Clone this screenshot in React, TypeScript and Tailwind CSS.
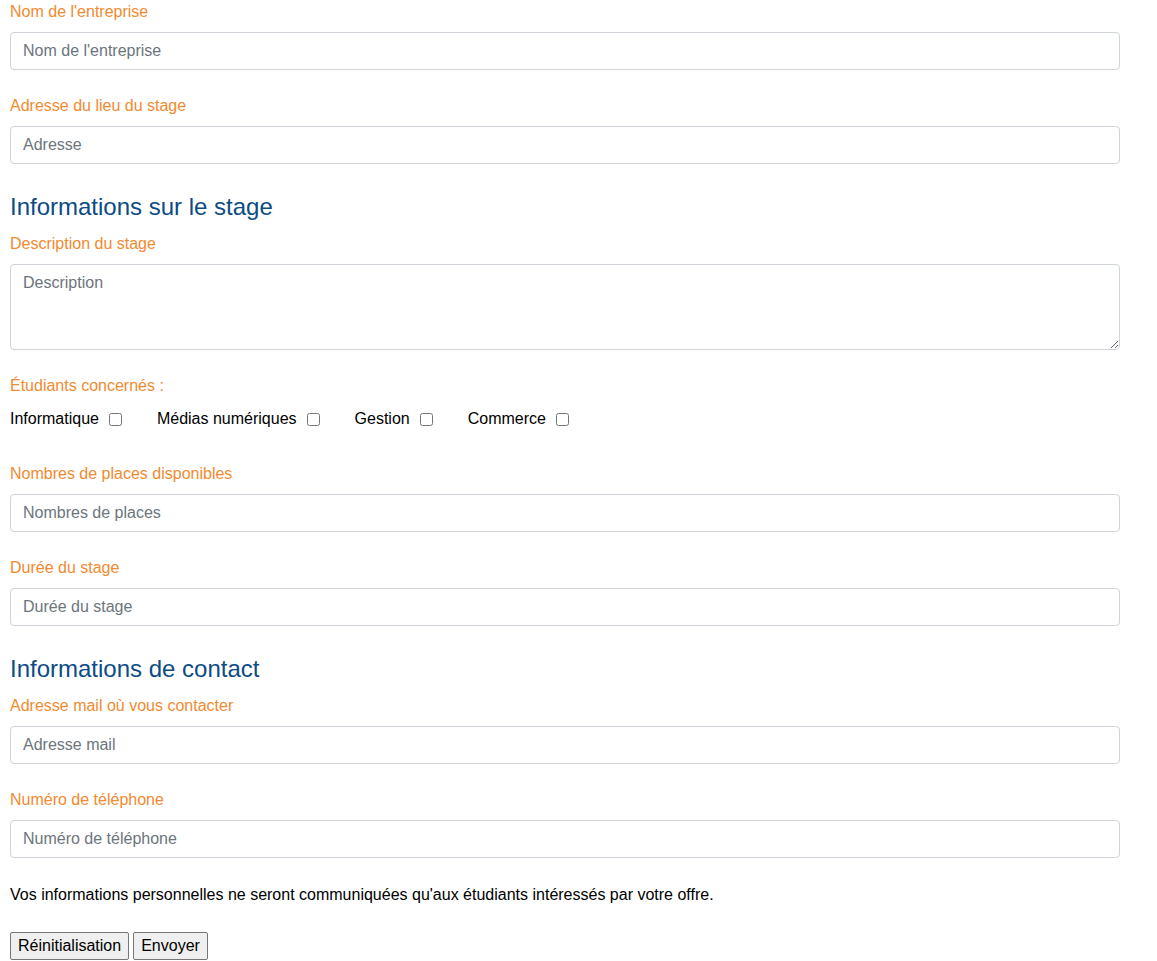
import React from "react";

const font = { fontFamily: '"Liberation Sans", Arial, sans-serif' };

function Field({ label, placeholder }: { label: string; placeholder: string }) {
  return (
    <div className="mb-6">
      <label className="block text-[16px] leading-[24px] text-[#f28a30] mb-2">{label}</label>
      <input
        type="text"
        placeholder={placeholder}
        className="block w-full h-[38px] px-3 py-[6px] text-[16px] leading-[24px] text-[#495057] bg-white border border-[#ced4da] rounded-[4px] placeholder:text-[#6c757d] outline-none"
      />
    </div>
  );
}

function Heading({ children }: { children: React.ReactNode }) {
  return (
    <h3 className="text-[24px] leading-[29px] text-[#0c4b86] font-normal pt-1 mb-[11px]">{children}</h3>
  );
}

export default function App() {
  const checks = ["Informatique", "Médias numériques", "Gestion", "Commerce"];
  return (
    <div className="bg-white min-h-[961px] text-black" style={font}>
      <form className="w-[1110px] ml-[10px]">
        <Field label="Nom de l'entreprise" placeholder="Nom de l'entreprise" />
        <Field label="Adresse du lieu du stage" placeholder="Adresse" />
        <Heading>Informations sur le stage</Heading>
        <div className="mb-6">
          <label className="block text-[16px] leading-[24px] text-[#f28a30] mb-2">Description du stage</label>
          <textarea
            placeholder="Description"
            className="block w-full h-[86px] px-3 py-[6px] text-[16px] leading-[24px] text-[#495057] bg-white border border-[#ced4da] rounded-[4px] placeholder:text-[#6c757d] outline-none resize-y"
          />
        </div>
        <div className="mb-[31px]">
          <label className="block text-[16px] leading-[24px] text-[#f28a30] mb-[9px]">Étudiants concernés :</label>
          <div className="flex items-center h-[24px] text-[16px]">
            {checks.map((c, i) => (
              <label key={c} className={`flex items-center ${i > 0 ? "ml-[35px]" : ""}`}>
                <span>{c}</span>
                <input type="checkbox" className="ml-[10px] w-[13px] h-[13px] m-0" />
              </label>
            ))}
          </div>
        </div>
        <Field label="Nombres de places disponibles" placeholder="Nombres de places" />
        <Field label="Durée du stage" placeholder="Durée du stage" />
        <Heading>Informations de contact</Heading>
        <Field label="Adresse mail où vous contacter" placeholder="Adresse mail" />
        <Field label="Numéro de téléphone" placeholder="Numéro de téléphone" />
        <p className="text-[16px] leading-[24px] mt-[25px] mb-[25px]">
          Vos informations personnelles ne seront communiquées qu'aux étudiants intéressés par votre offre.
        </p>
        <div className="flex gap-[4px]">
          <button type="reset" className="px-[7px] py-[4px] text-[16px] leading-[18px] bg-[#efefef] border border-[#767676] rounded-[2px] text-black">
            Réinitialisation
          </button>
          <button type="submit" className="px-[7px] py-[4px] text-[16px] leading-[18px] bg-[#efefef] border border-[#767676] rounded-[2px] text-black">
            Envoyer
          </button>
        </div>
      </form>
    </div>
  );
}
